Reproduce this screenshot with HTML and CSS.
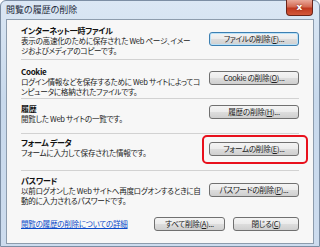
FILE: index.html
```html
<!DOCTYPE html>
<html lang="ja">
<head>
    <meta charset="UTF-8">
    <title>閲覧の履歴の削除</title>
    <link rel="stylesheet" href="styles.css">
</head>
<body>
<div class="window">
    <div class="titlebar">
        <span class="title">閲覧の履歴の削除</span>
        <span class="close">x</span>
    </div>
    <div class="client">
        <div class="sec sec-temp">
            <div class="text">
                <h3>インターネット一時ファイル</h3>
                <p>表示の高速化のために保存された Web ページ、イメー<br>ジおよびメディアのコピーです。</p>
            </div>
            <button class="btn btn-default">ファイルの削除(<u>F</u>)...</button>
        </div>
        <div class="sec sec-cookie">
            <div class="text">
                <h3>Cookie</h3>
                <p>ログイン情報などを保存するために Web サイトによってコ<br>ンピュータに格納されたファイルです。</p>
            </div>
            <button class="btn">Cookie の削除(<u>O</u>)...</button>
        </div>
        <div class="sec sec-history">
            <div class="text">
                <h3>履歴</h3>
                <p>閲覧した Web サイトの一覧です。</p>
            </div>
            <button class="btn">履歴の削除(<u>H</u>)...</button>
        </div>
        <div class="sec sec-form">
            <div class="text">
                <h3>フォーム データ</h3>
                <p>フォームに入力して保存された情報です。</p>
            </div>
            <div class="marked">
                <button class="btn">フォームの削除(<u>E</u>)...</button>
            </div>
        </div>
        <div class="sec sec-pass">
            <div class="text">
                <h3>パスワード</h3>
                <p>以前ログオンした Web サイトへ再度ログオンするときに自<br>動的に入力されるパスワードです。</p>
            </div>
            <button class="btn">パスワードの削除(<u>P</u>)...</button>
        </div>
        <div class="footer">
            <a href="#" class="help">閲覧の履歴の削除についての詳細</a>
            <button class="btn btn-all">すべて削除(<u>A</u>)...</button>
            <button class="btn btn-close">閉じる(<u>C</u>)</button>
        </div>
    </div>
</div>
</body>
</html>
```

FILE: styles.css
```css
body {
    margin: 0;
    width: 320px;
    height: 247px;
    overflow: hidden;
    background: #fff;
    font-family: "Noto Sans CJK JP", "DejaVu Sans", sans-serif;
    font-feature-settings: "palt";
}
.window {
    box-sizing: border-box;
    height: 247px;
    border: 1px solid #7c8ea4;
    border-radius: 6px 6px 0 0;
    padding: 0 5px 2px 5px;
    background: linear-gradient(#dbe7f4, #c8d9ec 40%, #cddcee);
}
.titlebar {
    height: 18px;
    position: relative;
}
.title {
    display: block;
    padding: 3px 0 0 0;
    font-size: 9px;
    line-height: 11px;
    color: #1e2a3a;
}
.close {
    position: absolute;
    top: -1px;
    right: 1px;
    width: 27px;
    height: 16px;
    box-sizing: border-box;
    border: 1px solid #6b2418;
    border-top: none;
    border-radius: 0 0 4px 4px;
    background: linear-gradient(#e9a99a, #d46a53 45%, #c0391f 55%, #d2583a);
    color: #fff;
    font: bold 9px/14px "DejaVu Sans", sans-serif;
    text-align: center;
    text-shadow: 0 0 2px #6b2418;
}
.client {
    box-sizing: border-box;
    height: 225px;
    border: 1px solid #8d9cad;
    background: #f7f7f7;
    padding: 0 14px;
    font-size: 7.6px;
    line-height: 10px;
    letter-spacing: -0.3px;
    color: #222;
}
.sec {
    display: flex;
    align-items: flex-start;
    justify-content: space-between;
    box-sizing: border-box;
    border-bottom: 1px solid #d2d2d2;
}
.text {
    flex: 1;
    min-width: 0;
    white-space: nowrap;
}
.sec h3 {
    margin: 0;
    font-size: 8px;
    line-height: 10px;
    font-weight: bold;
    color: #111;
}
.sec p {
    margin: 0;
}
.sec-temp { height: 40px; padding-top: 6px; }
.sec-temp .btn { margin-top: 6px; }
.sec-cookie { height: 39px; padding-top: 7px; }
.sec-cookie .btn { margin-top: 4px; }
.sec-history { height: 35px; padding-top: 5px; }
.sec-history .btn { margin-top: 1px; }
.sec-form { height: 37px; padding-top: 4px; }
.sec-form .marked { margin-top: 4px; }
.sec-pass { height: 36px; padding-top: 5px; border-bottom: none; }
.sec-pass .btn { margin-top: 7px; }
.btn {
    box-sizing: border-box;
    flex-shrink: 0;
    width: 90px;
    height: 14px;
    padding: 0;
    border: 1px solid #707070;
    border-radius: 3px;
    background: linear-gradient(#f4f4f4, #ebebeb 50%, #dddddd 51%, #cfcfcf);
    font-family: "Noto Sans CJK JP", "DejaVu Sans", sans-serif;
    font-feature-settings: "palt";
    font-size: 7.6px;
    line-height: 12px;
    letter-spacing: -0.3px;
    color: #222;
}
.btn-default {
    border-color: #3c7fb1;
    box-shadow: inset 0 0 0 1px #b9e1f8;
}
.marked {
    position: relative;
    flex-shrink: 0;
}
.marked::after {
    content: "";
    position: absolute;
    top: -7px;
    left: -7px;
    right: -9px;
    bottom: -8px;
    border: 2px solid #e8101c;
    border-radius: 5px;
}
.footer {
    display: flex;
    align-items: center;
    margin-top: 10px;
    gap: 8px;
}
.help {
    flex: 1;
    color: #0a49c9;
    text-decoration: underline;
}
.btn-all { width: 71px; }
.btn-close { width: 66px; }
```
